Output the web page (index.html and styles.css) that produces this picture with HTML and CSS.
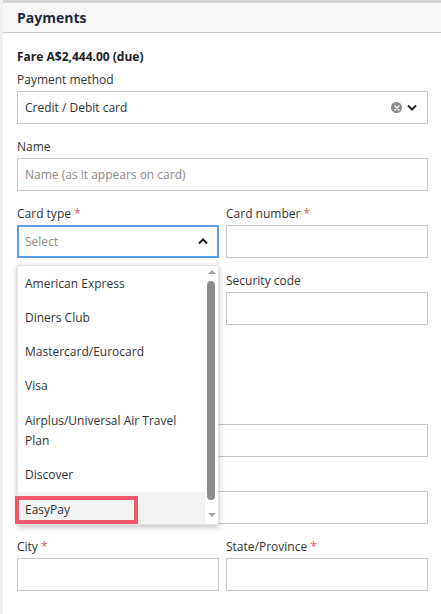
FILE: index.html
```html
<!DOCTYPE html>
<html lang="en">
<head>
    <meta charset="UTF-8">
    <meta name="viewport" content="width=device-width, initial-scale=1.0">
    <title>Payments</title>
    <link rel="stylesheet" href="styles.css">
</head>
<body>
    <div class="panel">
        <div class="panel-header">Payments</div>

        <div class="panel-body">
            <div class="fare">Fare A$2,444.00 (due)</div>

            <div class="field">
                <label>Payment method</label>
                <div class="select">
                    <span>Credit / Debit card</span>
                    <span class="select-icons">
                        <span class="clear-icon">
                            <svg width="6" height="6" viewBox="0 0 6 6"><path d="M1 1 L5 5 M5 1 L1 5" stroke="#fff" stroke-width="1.4" stroke-linecap="round"/></svg>
                        </span>
                        <svg class="chevron" width="10" height="7" viewBox="0 0 10 7"><path d="M1 1.5 L5 5.5 L9 1.5" fill="none" stroke="#222" stroke-width="2"/></svg>
                    </span>
                </div>
            </div>

            <div class="field">
                <label>Name</label>
                <div class="input placeholder">Name (as it appears on card)</div>
            </div>

            <div class="row">
                <div class="field card-type">
                    <label>Card type <span class="req">*</span></label>
                    <div class="select focused">
                        <span class="placeholder">Select</span>
                        <svg class="chevron" width="10" height="7" viewBox="0 0 10 7"><path d="M1 5.5 L5 1.5 L9 5.5" fill="none" stroke="#222" stroke-width="2"/></svg>
                    </div>

                    <!-- open dropdown list -->
                    <div class="dropdown">
                        <ul class="options">
                            <li>American Express</li>
                            <li>Diners Club</li>
                            <li>Mastercard/Eurocard</li>
                            <li>Visa</li>
                            <li class="wrap">Airplus/Universal Air Travel Plan</li>
                            <li>Discover</li>
                            <li class="active">EasyPay</li>
                        </ul>
                        <div class="scrollbar">
                            <span class="arrow-up"></span>
                            <span class="thumb"></span>
                            <span class="arrow-down"></span>
                        </div>
                    </div>
                    <div class="highlight"></div>
                </div>
                <div class="field">
                    <label>Card number <span class="req">*</span></label>
                    <div class="input"></div>
                </div>
            </div>

            <!-- fields below are covered by the open list -->
            <div class="row">
                <div class="field">
                    <label class="blank"></label>
                    <div class="input"></div>
                </div>
                <div class="field">
                    <label>Security code</label>
                    <div class="input"></div>
                </div>
            </div>

            <div class="row">
                <div class="field short">
                    <label class="blank"></label>
                    <div class="input"></div>
                </div>
                <div></div>
            </div>

            <div class="field">
                <label class="blank"></label>
                <div class="input"></div>
            </div>

            <div class="field">
                <label class="blank"></label>
                <div class="input"></div>
            </div>

            <div class="row">
                <div class="field">
                    <label>City <span class="req">*</span></label>
                    <div class="input"></div>
                </div>
                <div class="field">
                    <label>State/Province <span class="req">*</span></label>
                    <div class="input"></div>
                </div>
            </div>
        </div>
    </div>

    <div class="footer">
        <span class="round-btn"></span>
    </div>
</body>
</html>
```

FILE: styles.css
```css
body {
    margin: 0;
    background: #fff;
    font-family: "Open Sans", "Liberation Sans", sans-serif;
    font-size: 12px;
    color: #333;
}
.panel {
    border-left: 3px solid #eef0f4;
    background: #fff;
}
.panel-header {
    height: 29px;
    padding: 0 0 0 14px;
    line-height: 30px;
    font-size: 14px;
    font-weight: bold;
    color: #1d2b3a;
    background: #f7f7f7;
    border-top: 3px solid #d2d2d2;
    border-bottom: 1px solid #cbcbcb;
}
.panel-body {
    padding: 15px 13px 13px 14px;
}
.fare {
    font-weight: bold;
    line-height: 16px;
    padding-top: 1px;
    color: #222;
    margin-bottom: 6px;
}
.field {
    margin-bottom: 14px;
}
.field label {
    display: block;
    height: 16px;
    line-height: 16px;
    padding-top: 1px;
    margin-bottom: 3px;
    color: #333;
}
.req {
    color: #e2545e;
}
.row {
    display: grid;
    grid-template-columns: 1fr 1fr;
    gap: 7px;
}
.row .field.short {
    margin-bottom: 12px;
}
.input,
.select {
    box-sizing: border-box;
    height: 33px;
    border: 1px solid #c9c9c9;
    background: #fff;
    padding: 0 7px;
    line-height: 31px;
}
.placeholder {
    color: #8a8a8a;
}
.select {
    display: flex;
    align-items: center;
    justify-content: space-between;
}
.select.focused {
    border: 2px solid #5b9ceb;
    padding: 0 6px;
}
.select-icons {
    display: flex;
    align-items: center;
    gap: 5px;
}
.clear-icon {
    width: 11px;
    height: 11px;
    border-radius: 50%;
    background: #8b8b8b;
    display: flex;
    align-items: center;
    justify-content: center;
}
.chevron {
    display: block;
    margin-right: 3px;
}
.card-type {
    position: relative;
}
.dropdown {
    position: absolute;
    top: 60px;
    left: 0;
    right: 0;
    height: 258px;
    background: #fff;
    border: 1px solid #e4e4e4;
    box-shadow: 0 2px 6px rgba(0, 0, 0, 0.25);
    overflow: hidden;
    z-index: 5;
}
.options {
    list-style: none;
    margin: 0;
    padding: 1px 0 0;
    margin-right: 13px;
}
.options li {
    padding: 7px 7px;
    line-height: 20px;
    color: #333;
}
.options li.wrap {
    padding-top: 8px;
}
.options li.active {
    background: #f2f3f3;
    padding-top: 8px;
}
.scrollbar {
    position: absolute;
    top: 0;
    right: 0;
    bottom: 0;
    width: 13px;
    background: #fff;
}
.arrow-up,
.arrow-down {
    position: absolute;
    left: 3px;
    width: 0;
    height: 0;
    border-left: 4px solid transparent;
    border-right: 4px solid transparent;
}
.arrow-up {
    top: 4px;
    border-bottom: 4px solid #a3a3a3;
}
.arrow-down {
    bottom: 7px;
    border-top: 4px solid #a3a3a3;
}
.thumb {
    position: absolute;
    top: 15px;
    left: 2px;
    width: 8px;
    height: 219px;
    border-radius: 4px;
    background: #8c8c8c;
}
.highlight {
    position: absolute;
    left: -2px;
    top: 291px;
    width: 115px;
    height: 20px;
    border: 4px solid #f2576c;
    z-index: 6;
}
.footer {
    display: flex;
    justify-content: center;
    padding-top: 7px;
    height: 4px;
    overflow: hidden;
}
.round-btn {
    flex: none;
    width: 30px;
    height: 30px;
    border-radius: 50%;
    border: 1px solid #c9c9c9;
    box-sizing: border-box;
    margin-left: 2px;
}
```
